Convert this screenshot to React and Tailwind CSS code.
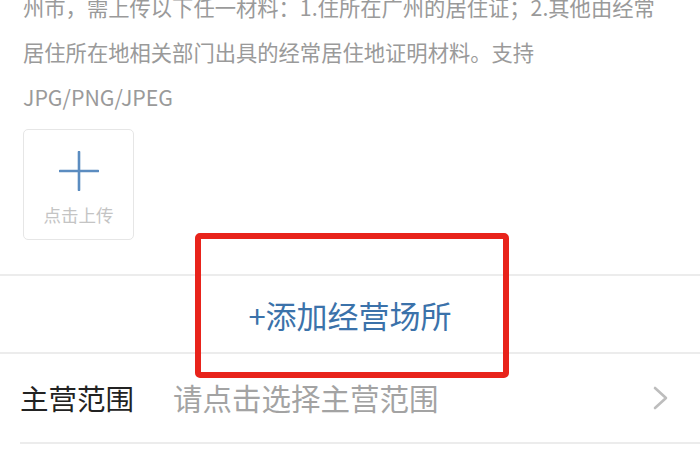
import React from 'react';

const font = { fontFamily: '"Noto Sans CJK SC", "Noto Sans", sans-serif' };

const UploadBox = () => (
  <div className="flex h-[111px] w-[111px] flex-col items-center rounded-[5px] border border-[#e6e6e6] bg-white">
    <svg width="40" height="40" viewBox="0 0 40 40" className="mt-[21px]">
      <path d="M20 1v38M1 20h38" stroke="#5b8cc0" strokeWidth="2.6" strokeLinecap="round" />
    </svg>
    <span className="mt-[14px] text-[17.5px] leading-[20px] text-[#c4c4c4]">点击上传</span>
  </div>
);

const App = () => {
  return (
    <div className="relative h-[470px] w-[700px] overflow-hidden bg-white" style={font}>
      {/* Hint text + upload */}
      <div className="px-[23px]">
        <div className="-mt-[16px] text-[21.3px] leading-[45px] text-[#9a9a9a]">
          <div className="whitespace-nowrap">州市，需上传以下任一材料：1.住所在广州的居住证；2.其他由经常</div>
          <div className="whitespace-nowrap">居住所在地相关部门出具的经常居住地证明材料。支持</div>
          <div>JPG/PNG/JPEG</div>
        </div>
        <div className="mt-[10px]">
          <UploadBox />
        </div>
      </div>

      <div className="mt-[34px] h-[2px] bg-[#ececec]" />

      {/* Add place */}
      <div className="flex h-[76px] items-center justify-center">
        <span className="text-[31px] leading-none text-[#3b72aa]">+添加经营场所</span>
      </div>

      <div className="h-[2px] bg-[#ececec]" />

      {/* Main scope row */}
      <div className="flex h-[88px] items-center pl-[20px] pr-[30px]">
        <span className="w-[153px] text-[28.5px] leading-none text-[#222]">主营范围</span>
        <span className="flex-1 text-[29.5px] leading-none text-[#a3a3a3]">请点击选择主营范围</span>
        <svg width="18" height="24" viewBox="0 0 18 24">
          <path d="M3 2l11 10L3 22" fill="none" stroke="#bdbdbd" strokeWidth="2.6" strokeLinecap="round" strokeLinejoin="round" />
        </svg>
      </div>

      <div className="ml-[20px] h-[2px] bg-[#ececec]" />

      {/* Red highlight annotation */}
      <div className="absolute left-[195px] top-[233px] h-[145px] w-[314px] rounded-[5px] border-[6px] border-[#e8231b]" />
    </div>
  );
};

export default App;
